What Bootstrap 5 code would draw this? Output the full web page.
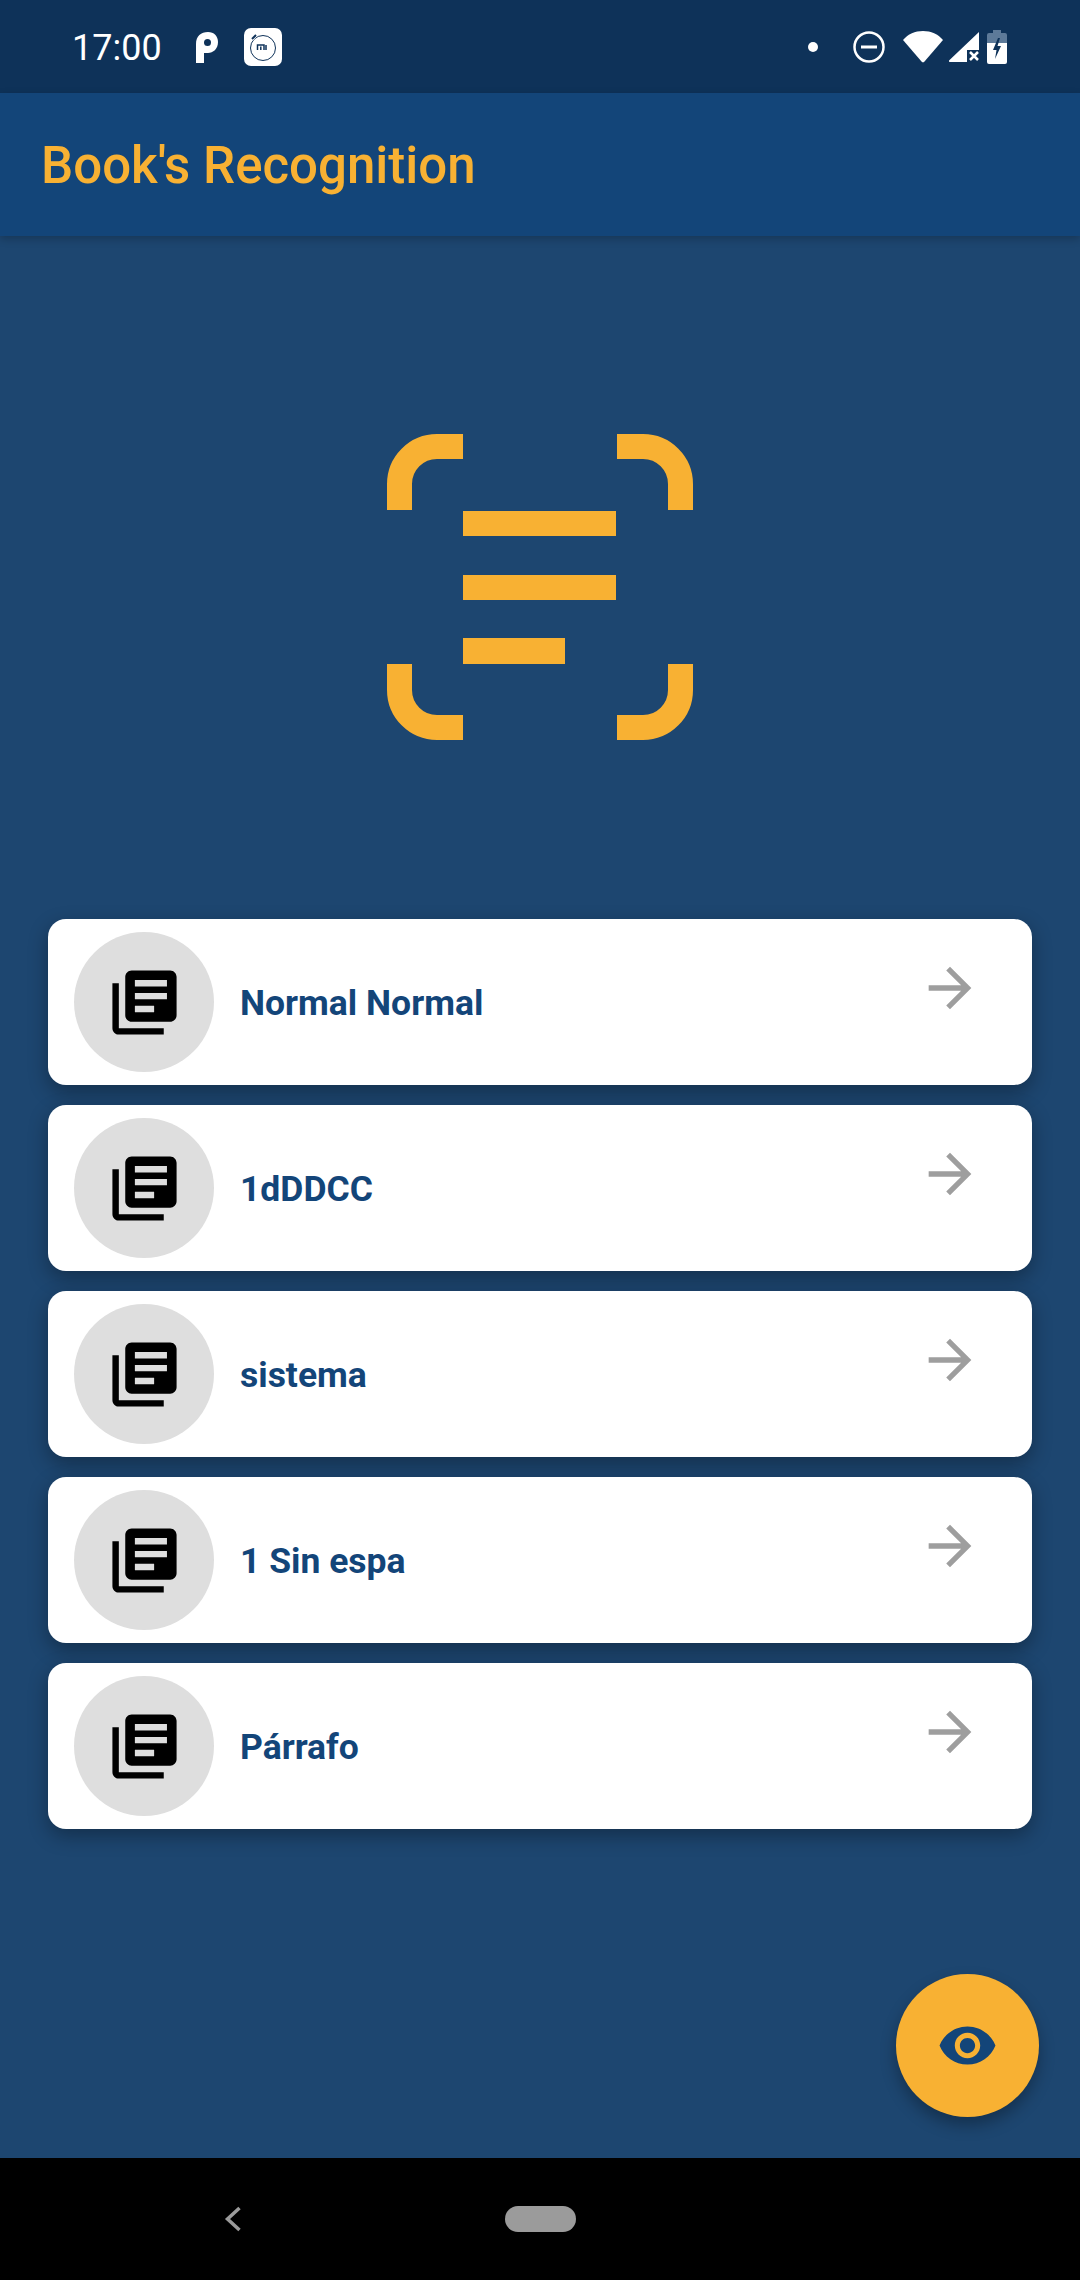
<!DOCTYPE html>
<html lang="en">
<head>
  <meta charset="UTF-8">
  <meta name="viewport" content="width=device-width, initial-scale=1">
  <title>Book's Recognition</title>
  <link href="https://cdn.jsdelivr.net/npm/bootstrap@5.3.3/dist/css/bootstrap.min.css" rel="stylesheet">
  <style>
    html, body { height: 100%; }
    body { font-family: Roboto, "Liberation Sans", sans-serif; background: #000; }
    .phone { width: 1080px; height: 2280px; background: #1d4670; overflow: hidden; }
    .status-bar { height: 93px; background: #0e3259; color: #fff; padding-left: 72px; padding-right: 73px; }
    .status-time { font-size: 36px; line-height: 1; width: 123px; margin-top: 2px; }
    .ic-p { width: 24px; height: 32px; margin-right: 25px; }
    .ic-mi { width: 38px; height: 38px; }
    .status-right { gap: 6px; }
    .ic-dot { width: 10px; height: 10px; margin-right: 29px; }
    .ic-dnd { width: 32px; height: 32px; margin-right: 12px; }
    .ic-wifi { width: 40px; height: 32px; }
    .ic-signal { width: 30px; height: 30px; }
    .ic-batt { width: 20px; height: 34px; margin-left: 2px; }
    .app-bar { height: 143px; background: #134579; padding-left: 41px; box-shadow: 0 3px 8px rgba(0,0,0,.22); z-index: 2; }
    .app-title { font-size: 51px; font-weight: 500; color: #f8b133; margin-top: 4px; }
    .app-main { padding: 198px 48px 0; }
    .scan-ic { width: 306px; height: 306px; display: block; margin: 0 auto 179px; }
    .doc-list { gap: 20px; }
    .doc-item { height: 166px; border: 0; border-radius: 18px; padding-left: 26px; padding-right: 50px; box-shadow: 0 7px 20px rgba(0,0,0,.32); }
    .doc-avatar { width: 140px; height: 140px; background: #dedede; }
    .doc-avatar svg { width: 77px; height: 77px; }
    .doc-name { font-size: 35.5px; font-weight: 700; color: #134579; margin-left: 26px; margin-top: 3px; }
    .doc-arrow { width: 64px; height: 64px; fill: #9e9e9e; margin-top: 37px; }
    .fab-eye { position: absolute; left: 896px; top: 1974px; width: 143px; height: 143px; background: #f8b133; box-shadow: 0 8px 16px rgba(0,0,0,.3); }
    .fab-eye svg { width: 61px; height: 61px; fill: #134579; }
    .sys-nav { height: 122px; background: #000; }
    .sys-back { position: absolute; left: 224px; top: 47px; width: 18px; height: 28px; }
    .sys-pill { width: 71px; height: 26px; background: #9b9b9b; }
  </style>
</head>
<body>

<svg width="0" height="0" class="position-absolute">
  <symbol id="i-books" viewBox="0 0 24 24"><path d="M4 6H2v14c0 1.1.9 2 2 2h14v-2H4V6zm16-4H8c-1.1 0-2 .9-2 2v12c0 1.1.9 2 2 2h12c1.1 0 2-.9 2-2V4c0-1.1-.9-2-2-2zm-1 9H9V9h10v2zm-4 4H9v-2h6v2zm4-8H9V5h10v2z"/></symbol>
  <symbol id="i-arrow" viewBox="0 0 24 24"><path d="M12 4l-1.41 1.41L16.17 11H4v2h12.17l-5.58 5.59L12 20l8-8z"/></symbol>
</svg>

<div class="phone position-relative d-flex flex-column">

  <div class="status-bar d-flex align-items-center justify-content-between flex-shrink-0">
    <div class="d-flex align-items-center">
      <span class="status-time">17:00</span>
      <svg class="ic-p" viewBox="0 0 24 32"><path fill="#fff" d="M1 32V13C1 5 6 1 13 1c6 0 10 4 10 10 0 7-5 11-10 11H9v10z"/><circle cx="12.500" cy="11.500" r="3.500" fill="#0e3259"/></svg>
      <svg class="ic-mi" viewBox="0 0 38 38">
        <rect width="38" height="38" rx="7" fill="#fff"/>
        <circle cx="19" cy="20" r="12.500" fill="none" stroke="#0e3259" stroke-width="1"/>
        <path d="M7 11l5-5" stroke="#fff" stroke-width="5"/>
        <path d="M8 11l4-4" stroke="#0e3259" stroke-width="2"/>
        <path d="M13.500 22v-5h6.500v5M16.800 22v-3.500M22 17v5" fill="none" stroke="#0e3259" stroke-width="1.500"/>
      </svg>
    </div>
    <div class="status-right d-flex align-items-center">
      <svg class="ic-dot" viewBox="0 0 10 10"><circle cx="5" cy="5" r="5" fill="#fff"/></svg>
      <svg class="ic-dnd" viewBox="0 0 32 32"><circle cx="16" cy="16" r="14.500" fill="none" stroke="#fff" stroke-width="2.500"/><rect x="8" y="14.500" width="16" height="3" fill="#fff"/></svg>
      <svg class="ic-wifi" viewBox="0 0 40 32"><path fill="#fff" d="M0 9C5 3 12 0 20 0s15 3 20 9L21.500 30.500a2 2 0 0 1-3 0z"/></svg>
      <svg class="ic-signal" viewBox="0 0 30 30"><path fill="#fff" d="M30 0v18H18v12H1a1 1 0 0 1-.7-1.700z"/><path d="M21 20l8 8M29 20l-8 8" stroke="#fff" stroke-width="2.500"/></svg>
      <svg class="ic-batt" viewBox="0 0 20 34"><path fill="#5d7a99" d="M6 0h8v3h4a2 2 0 0 1 2 2v8H0V5a2 2 0 0 1 2-2h4z"/><path fill="#fff" d="M0 13h20v19a2 2 0 0 1-2 2H2a2 2 0 0 1-2-2z"/><path fill="#0e3259" d="M11 8L6 20h3.500L8 29l6-13h-3.500L13 8z"/></svg>
    </div>
  </div>

  <div class="app-bar d-flex align-items-center flex-shrink-0">
    <span class="app-title">Book's Recognition</span>
  </div>

  <div class="app-main flex-grow-1">
    <svg class="scan-ic" viewBox="0 0 306 306">
      <g fill="none" stroke="#f8b133" stroke-width="25">
        <path d="M76 12.500H50A37.500 37.500 0 0 0 12.500 50V76"/>
        <path d="M230 12.500h26A37.500 37.500 0 0 1 293.500 50V76"/>
        <path d="M12.500 230v26A37.500 37.500 0 0 0 50 293.500H76"/>
        <path d="M293.500 230v26A37.500 37.500 0 0 1 256 293.500H230"/>
      </g>
      <g fill="#f8b133">
        <rect x="76" y="77" width="153" height="25"/>
        <rect x="76" y="141" width="153" height="25"/>
        <rect x="76" y="204" width="102" height="26"/>
      </g>
    </svg>

    <div class="doc-list d-flex flex-column">
      <div class="card doc-item flex-row align-items-center justify-content-between">
        <div class="d-flex align-items-center">
          <div class="doc-avatar rounded-circle d-flex align-items-center justify-content-center"><svg><use href="#i-books"/></svg></div>
          <span class="doc-name">Normal Normal</span>
        </div>
        <svg class="doc-arrow align-self-start"><use href="#i-arrow"/></svg>
      </div>
      <div class="card doc-item flex-row align-items-center justify-content-between">
        <div class="d-flex align-items-center">
          <div class="doc-avatar rounded-circle d-flex align-items-center justify-content-center"><svg><use href="#i-books"/></svg></div>
          <span class="doc-name">1dDDCC</span>
        </div>
        <svg class="doc-arrow align-self-start"><use href="#i-arrow"/></svg>
      </div>
      <div class="card doc-item flex-row align-items-center justify-content-between">
        <div class="d-flex align-items-center">
          <div class="doc-avatar rounded-circle d-flex align-items-center justify-content-center"><svg><use href="#i-books"/></svg></div>
          <span class="doc-name">sistema</span>
        </div>
        <svg class="doc-arrow align-self-start"><use href="#i-arrow"/></svg>
      </div>
      <div class="card doc-item flex-row align-items-center justify-content-between">
        <div class="d-flex align-items-center">
          <div class="doc-avatar rounded-circle d-flex align-items-center justify-content-center"><svg><use href="#i-books"/></svg></div>
          <span class="doc-name">1 Sin espa</span>
        </div>
        <svg class="doc-arrow align-self-start"><use href="#i-arrow"/></svg>
      </div>
      <div class="card doc-item flex-row align-items-center justify-content-between">
        <div class="d-flex align-items-center">
          <div class="doc-avatar rounded-circle d-flex align-items-center justify-content-center"><svg><use href="#i-books"/></svg></div>
          <span class="doc-name">Párrafo</span>
        </div>
        <svg class="doc-arrow align-self-start"><use href="#i-arrow"/></svg>
      </div>
    </div>
  </div>

  <div class="fab-eye rounded-circle d-flex align-items-center justify-content-center">
    <svg viewBox="0 0 24 24"><path d="M12 4.500C7 4.500 2.730 7.610 1 12c1.730 4.390 6 7.500 11 7.500s9.270-3.110 11-7.500c-1.730-4.390-6-7.500-11-7.500zM12 17c-2.760 0-5-2.240-5-5s2.240-5 5-5 5 2.240 5 5-2.240 5-5 5zm0-8c-1.660 0-3 1.340-3 3s1.340 3 3 3 3-1.340 3-3-1.340-3-3-3z"/></svg>
  </div>

  <div class="sys-nav position-relative d-flex align-items-center justify-content-center flex-shrink-0">
    <svg class="sys-back" viewBox="0 0 18 28"><path d="M15.500 3L3.500 14l12 11" fill="none" stroke="#9b9b9b" stroke-width="3.500"/></svg>
    <div class="sys-pill rounded-pill"></div>
  </div>

</div>

<script src="https://cdn.jsdelivr.net/npm/bootstrap@5.3.3/dist/js/bootstrap.bundle.min.js"></script>
</body>
</html>
